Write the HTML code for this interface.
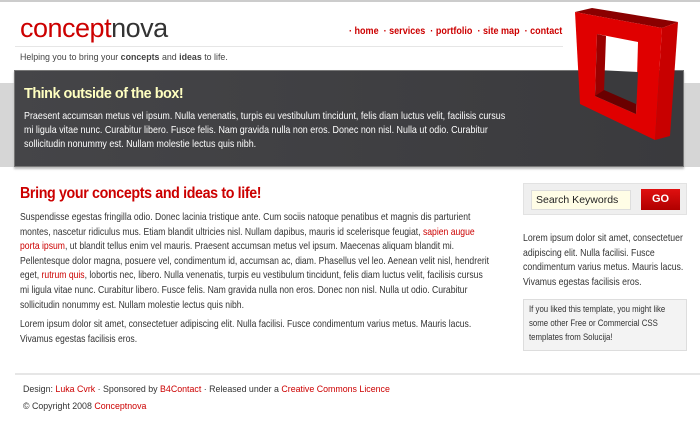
<!DOCTYPE html>
<html><head><style>
*{margin:0;padding:0;box-sizing:border-box}
body{width:700px;height:437px;background:#fff;font-family:"Liberation Sans",Arial,sans-serif;color:#333;position:relative;overflow:hidden}
a{color:#c00;text-decoration:none}
.abs{position:absolute;transform-origin:0 0}
</style></head><body>
<div class="abs" style="left:0;top:0;width:700px;height:2px;background:#ccc"></div>
<div class="abs" style="left:20px;top:13px;font-size:27px;letter-spacing:-0.5px;color:#c00">concept<span style="color:#333">nova</span></div>
<div class="abs" style="left:349px;top:25px;font-size:10.5px;color:#c00;font-weight:bold;transform:scaleX(.86);white-space:nowrap">· home &nbsp;· services &nbsp;· portfolio &nbsp;· site map &nbsp;· contact</div>
<div class="abs" style="left:15px;top:46px;width:548px;height:1px;background:#e6e6e6"></div>
<div class="abs" style="left:20px;top:52px;font-size:9.5px;color:#444;transform:scaleX(.93);white-space:nowrap">Helping you to bring your <b>concepts</b> and <b>ideas</b> to life.</div>
<div class="abs" style="left:0;top:83px;width:700px;height:84px;background:#d6d6d6"></div>
<div class="abs" style="left:14px;top:70px;width:670px;height:97px;background:linear-gradient(90deg,#454548,#3a3a3d);border:1px solid #777;box-shadow:0 2px 2px #bbb"></div>
<div class="abs" style="left:24px;top:85px;font-size:15px;font-weight:bold;color:#ffffc0;letter-spacing:-0.5px;transform:scaleX(.96);white-space:nowrap">Think outside of the box!</div>
<div class="abs" style="left:24px;top:109px;width:578px;font-size:10.5px;line-height:14px;color:#fff;transform:scaleX(.85)">Praesent accumsan metus vel ipsum. Nulla venenatis, turpis eu vestibulum tincidunt, felis diam luctus velit, facilisis cursus mi ligula vitae nunc. Curabitur libero. Fusce felis. Nam gravida nulla non eros. Donec non nisl. Nulla ut odio. Curabitur sollicitudin nonummy est. Nullam molestie lectus quis nibh.</div>
<svg class="abs" style="left:570px;top:4px" width="112" height="136" viewBox="0 0 112 136">
<polygon points="5,8 22,4 108,18 92,24" fill="#8a0000"/>
<polygon points="92,24 108,18 100,132 85,136" fill="#c80000"/>
<polygon points="5,8 92,24 85,136 10,100" fill="#e00000"/>
<polygon points="27,30 68,38 66,110 25,92" fill="#fff"/>
<polygon points="27,66 68,68 66,110 25,92" fill="#3a3a3d"/>
<polygon points="27,30 36,32 34,88 25,92" fill="#9a0000"/>
<polygon points="25,92 66,110 66,100 34,86" fill="#6a0000"/>
</svg>
<div class="abs" style="left:20px;top:185px;font-size:15.5px;font-weight:bold;color:#c00;letter-spacing:-0.4px;transform:scaleX(.92);white-space:nowrap">Bring your concepts and ideas to life!</div>
<div class="abs" style="left:20px;top:210px;width:573px;font-size:10.5px;line-height:14.6px;color:#333;transform:scaleX(.82)">Suspendisse egestas fringilla odio. Donec lacinia tristique ante. Cum sociis natoque penatibus et magnis dis parturient montes, nascetur ridiculus mus. Etiam blandit ultricies nisl. Nullam dapibus, mauris id scelerisque feugiat, <a>sapien augue porta ipsum</a>, ut blandit tellus enim vel mauris. Praesent accumsan metus vel ipsum. Maecenas aliquam blandit mi. Pellentesque dolor magna, posuere vel, condimentum id, accumsan ac, diam. Phasellus vel leo. Aenean velit nisl, hendrerit eget, <a>rutrum quis</a>, lobortis nec, libero. Nulla venenatis, turpis eu vestibulum tincidunt, felis diam luctus velit, facilisis cursus mi ligula vitae nunc. Curabitur libero. Fusce felis. Nam gravida nulla non eros. Donec non nisl. Nulla ut odio. Curabitur sollicitudin nonummy est. Nullam molestie lectus quis nibh.</div>
<div class="abs" style="left:20px;top:317px;width:573px;font-size:10.5px;line-height:14.6px;color:#333;transform:scaleX(.82)">Lorem ipsum dolor sit amet, consectetuer adipiscing elit. Nulla facilisi. Fusce condimentum varius metus. Mauris lacus. Vivamus egestas facilisis eros.</div>
<div class="abs" style="left:523px;top:183px;width:164px;height:32px;background:#efefef;border:1px solid #e2e2e2"></div>
<div class="abs" style="left:531px;top:190px;width:100px;height:20px;background:#fffde6;border:1px solid #ddd;font-size:10.5px;padding:3px 4px;color:#222">Search Keywords</div>
<div class="abs" style="left:641px;top:189px;width:39px;height:21px;background:linear-gradient(#e01010,#b00000);color:#fff;font-size:11px;font-weight:bold;text-align:center;line-height:21px">GO</div>
<div class="abs" style="left:523px;top:231px;width:198px;font-size:10.5px;line-height:14.5px;color:#333;transform:scaleX(.83)">Lorem ipsum dolor sit amet, consectetuer adipiscing elit. Nulla facilisi. Fusce condimentum varius metus. Mauris lacus. Vivamus egestas facilisis eros.</div>
<div class="abs" style="left:523px;top:299px;width:164px;height:52px;background:#f3f3f3;border:1px solid #ddd"></div>
<div class="abs" style="left:529px;top:302px;width:160px;font-size:9px;line-height:14px;color:#333;transform:scaleX(.87)">If you liked this template, you might like some other Free or Commercial CSS templates from Solucija!</div>
<div class="abs" style="left:15px;top:373px;width:685px;height:2px;background:#e6e6e6"></div>
<div class="abs" style="left:23px;top:384px;font-size:9.5px;color:#333;transform:scaleX(.93);white-space:nowrap">Design: <a>Luka Cvrk</a> · Sponsored by <a>B4Contact</a> · Released under a <a>Creative Commons Licence</a></div>
<div class="abs" style="left:23px;top:401px;font-size:9.5px;color:#333;transform:scaleX(.93);white-space:nowrap">© Copyright 2008 <a>Conceptnova</a></div>
</body></html>
